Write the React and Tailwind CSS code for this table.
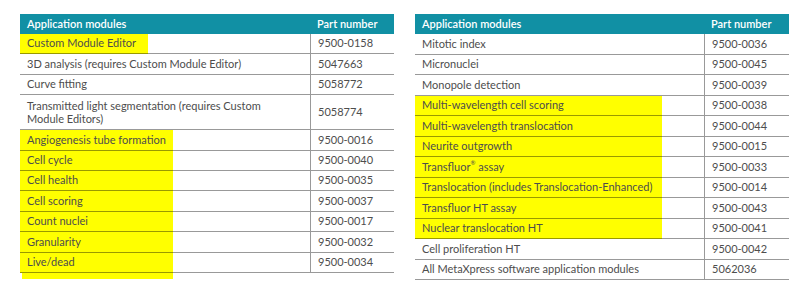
import React from 'react';

const HL = {
  short: 'bg-[linear-gradient(to_right,#ffff00_128px,transparent_128px)]',
  mid: 'bg-[linear-gradient(to_right,#ffff00_153px,transparent_153px)]',
  wide: 'bg-[linear-gradient(to_right,#ffff00_247px,transparent_247px)]',
};

const LEFT_ROWS = [
  { name: 'Custom Module Editor', part: '9500-0158', hl: 'short' },
  { name: '3D analysis (requires Custom Module Editor)', part: '5047663' },
  { name: 'Curve fitting', part: '5058772' },
  { name: ['Transmitted light segmentation (requires Custom', 'Module Editors)'], part: '5058774' },
  { name: 'Angiogenesis tube formation', part: '9500-0016', hl: 'mid' },
  { name: 'Cell cycle', part: '9500-0040', hl: 'mid' },
  { name: 'Cell health', part: '9500-0035', hl: 'mid' },
  { name: 'Cell scoring', part: '9500-0037', hl: 'mid' },
  { name: 'Count nuclei', part: '9500-0017', hl: 'mid' },
  { name: 'Granularity', part: '9500-0032', hl: 'mid' },
  { name: 'Live/dead', part: '9500-0034', hl: 'mid' },
];

const RIGHT_ROWS = [
  { name: 'Mitotic index', part: '9500-0036' },
  { name: 'Micronuclei', part: '9500-0045' },
  { name: 'Monopole detection', part: '9500-0039' },
  { name: 'Multi-wavelength cell scoring', part: '9500-0038', hl: 'wide' },
  { name: 'Multi-wavelength translocation', part: '9500-0044', hl: 'wide' },
  { name: 'Neurite outgrowth', part: '9500-0015', hl: 'wide' },
  { name: 'Transfluor®', part: '9500-0033', hl: 'wide', suffix: ' assay' },
  { name: 'Translocation (includes Translocation-Enhanced)', part: '9500-0014', hl: 'wide' },
  { name: 'Transfluor HT assay', part: '9500-0043', hl: 'wide' },
  { name: 'Nuclear translocation HT', part: '9500-0041', hl: 'wide' },
  { name: 'Cell proliferation HT', part: '9500-0042' },
  { name: 'All MetaXpress software application modules', part: '5062036' },
];

function ModuleName({ row }) {
  if (Array.isArray(row.name)) {
    return (
      <span className="leading-[13px]">
        {row.name[0]}
        <br />
        {row.name[1]}
      </span>
    );
  }
  if (row.suffix) {
    return (
      <span>
        Transfluor<sup className="text-[6px] align-[3px]">®</sup>{row.suffix}
      </span>
    );
  }
  return <span>{row.name}</span>;
}

function ModuleTable({ rows, firstCol, rowHeight }) {
  return (
    <div className="w-[374px] flex flex-col">
      <div className="flex h-5 bg-[#1190a4] text-white font-semibold text-[11px]">
        <div className={`${firstCol} flex items-center pl-[7px]`}>Application modules</div>
        <div className="flex-1 flex items-center pl-[7px]">Part number</div>
      </div>
      {rows.map((row, i) => {
        const tall = Array.isArray(row.name);
        return (
          <div key={i} className={`flex ${tall ? 'h-[35px]' : rowHeight}`}>
            <div
              className={`${firstCol} ${row.hl ? HL[row.hl] : ''} flex items-center pl-[7px] border-b border-black/40`}
            >
              <ModuleName row={row} />
            </div>
            <div className="flex-1 flex items-center pl-[7px] border-b border-l border-black/40">
              {row.part}
            </div>
          </div>
        );
      })}
    </div>
  );
}

export default function App() {
  return (
    <div
      className="w-[800px] h-[287px] bg-white flex gap-[21px] pl-5 pt-[14px] text-[11px] text-[#4d4d4d] overflow-hidden"
      style={{ fontFamily: 'Lato, "Liberation Sans", sans-serif' }}
    >
      <div className="flex flex-col">
        <ModuleTable rows={LEFT_ROWS} firstCol="w-[290px]" rowHeight="h-[20.4px]" />
        <div className="ml-[2px] w-[151px] h-[6px] bg-[#ffff00]" />
      </div>
      <ModuleTable rows={RIGHT_ROWS} firstCol="w-[289px]" rowHeight="h-[20.5px]" />
    </div>
  );
}
